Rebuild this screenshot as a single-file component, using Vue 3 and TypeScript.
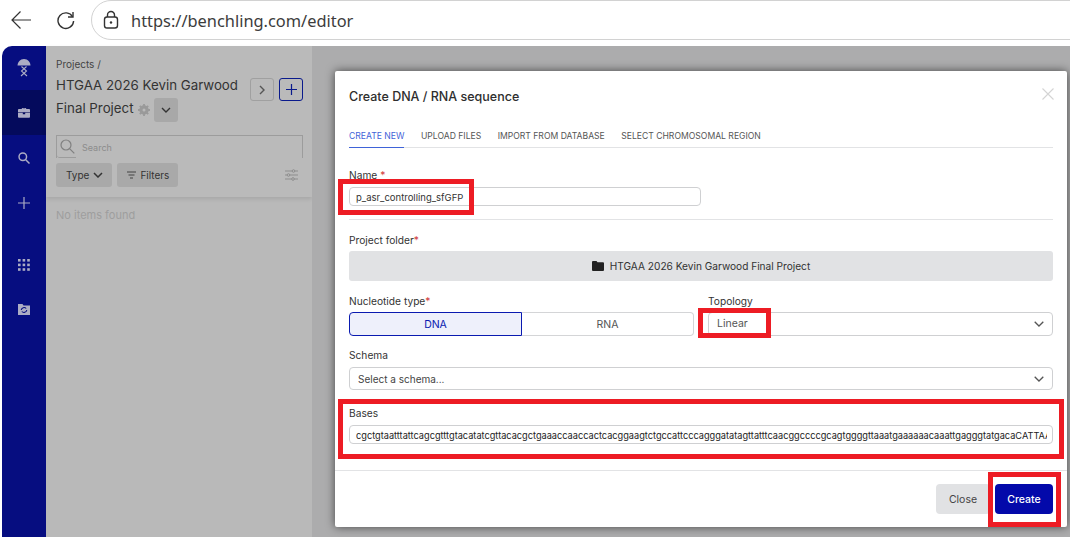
<template>
  <div class="page">
    <header class="browser-bar">
      <svg class="nav-icon" width="26" height="22" viewBox="0 0 26 22" fill="none" stroke="#333" stroke-width="1.2">
        <path d="M22 11H3M11.500 2.500 3 11l8.500 8.500" />
      </svg>
      <svg class="nav-icon reload" width="20" height="20" viewBox="0 0 20 20" fill="none" stroke="#333" stroke-width="1.400">
        <path d="M16.600 6.800A7.800 7.800 0 1 0 17.600 11" />
        <path d="M17 2v5h-5" />
      </svg>
      <div class="url-pill">
        <svg width="18" height="20" viewBox="0 0 18 20" fill="none" stroke="#333" stroke-width="1.400">
          <rect x="2.500" y="7" width="13" height="11" rx="2.500" />
          <path d="M5.500 7V5a3.500 3.500 0 0 1 7 0v2" />
          <circle cx="9" cy="12.500" r="1.200" fill="#333" stroke="none" />
        </svg>
        <span class="url">https://benchling.com/editor</span>
      </div>
    </header>

    <div class="app">
      <nav class="rail">
        <div class="rail-item logo">
          <svg width="14" height="18" viewBox="0 0 14 18" fill="#acacc4">
            <path d="M7 0C3 0 .8 3 .5 6.500h13C13.200 3 11 0 7 0Z" />
            <path d="M4.500 7.500 9.500 12 4 17M9.500 7.500 4.500 12 10 17" fill="none" stroke="#acacc4" stroke-width="1.100" />
          </svg>
        </div>
        <div class="rail-item active">
          <svg width="12" height="11" viewBox="0 0 14 12" fill="#acacc4">
            <path d="M4.500 2V.8h5V2H13a1 1 0 0 1 1 1v2.600H0V3a1 1 0 0 1 1-1h3.500Zm1 0h3v-.4h-3V2Z" />
            <path d="M0 6.400h5.600V8h2.800V6.400H14V11a1 1 0 0 1-1 1H1a1 1 0 0 1-1-1V6.400Z" />
          </svg>
        </div>
        <div class="rail-item">
          <svg width="12" height="12" viewBox="0 0 14 14" fill="none" stroke="#acacc4" stroke-width="1.700">
            <circle cx="5.600" cy="5.600" r="4.400" />
            <path d="m9 9 4.400 4.400" />
          </svg>
        </div>
        <div class="rail-item">
          <svg width="12" height="12" viewBox="0 0 13 13" stroke="#acacc4" stroke-width="1.300">
            <path d="M6.500 0v13M0 6.500h13" />
          </svg>
        </div>
        <div class="rail-item apps">
          <svg width="12" height="12" viewBox="0 0 12 12" fill="#acacc4">
            <template v-for="row in [0, 1, 2]" :key="row">
              <rect v-for="col in [0, 1, 2]" :key="col" :x="col * 4.600" :y="row * 4.600" width="2.600" height="2.600" />
            </template>
          </svg>
        </div>
        <div class="rail-item">
          <svg width="12" height="11" viewBox="0 0 12 11">
            <path d="M0 0h4.500l1 1.400H12V11H0Z" fill="#acacc4" />
            <path d="M3.200 6a2.900 2.900 0 0 1 5-1.500M8.800 6a2.900 2.900 0 0 1-5 1.500" fill="none" stroke="#060d80" stroke-width="1.100" />
          </svg>
        </div>
      </nav>

      <aside class="panel">
        <div class="panel-head">
          <div class="crumb">Projects /</div>
          <div class="title-row">
            <div class="title">
              <div class="title-line">HTGAA 2026 Kevin Garwood</div>
              <div class="title-line second">
                Final Project
                <svg class="gear" width="12" height="12" viewBox="0 0 12 12">
                  <circle cx="6" cy="6" r="3.400" fill="none" stroke="#9a9a9a" stroke-width="2.600" />
                  <path d="M6 0v12M0 6h12M1.800 1.800l8.400 8.400M10.200 1.800l-8.400 8.400" stroke="#9a9a9a" stroke-width="1.800" />
                  <circle cx="6" cy="6" r="1.500" fill="#bababa" />
                </svg>
                <span class="title-menu">
                  <svg width="10" height="6" viewBox="0 0 10 6" fill="none" stroke="#333" stroke-width="1.400"><path d="m1 1 4 4 4-4" /></svg>
                </span>
              </div>
            </div>
            <button class="square-btn" type="button">
              <svg width="6" height="10" viewBox="0 0 6 10" fill="none" stroke="#555" stroke-width="1.400"><path d="m1 1 4 4-4 4" /></svg>
            </button>
            <button class="square-btn add" type="button">
              <svg width="11" height="11" viewBox="0 0 11 11" stroke="#0a1a8c" stroke-width="1.200"><path d="M5.500 0v11M0 5.500h11" /></svg>
            </button>
          </div>

          <div class="search">
            <span class="search-icon">
              <svg width="15" height="15" viewBox="0 0 15 15" fill="none" stroke="#808080" stroke-width="1.200">
                <circle cx="6" cy="6" r="5" />
                <path d="m9.800 9.800 4.500 4.500" />
              </svg>
            </span>
            <span>Search</span>
          </div>

          <div class="filters">
            <button class="filter-btn" type="button">
              Type
              <svg width="10" height="6" viewBox="0 0 10 6" fill="none" stroke="#333" stroke-width="1.500"><path d="m1 1 4 4 4-4" /></svg>
            </button>
            <button class="filter-btn" type="button">
              <svg width="9" height="8" viewBox="0 0 9 8" stroke="#444" stroke-width="1.200"><path d="M0 1h9M1.500 4h6M3 7h3" /></svg>
              Filters
            </button>
            <svg class="sliders" width="13" height="12" viewBox="0 0 13 12" fill="#bababa" stroke="#8e8e8e">
              <path d="M0 2h13M0 6h13M0 10h13" />
              <circle cx="8.500" cy="2" r="1.300" />
              <circle cx="3.500" cy="6" r="1.300" />
              <circle cx="8" cy="10" r="1.300" />
            </svg>
          </div>
        </div>
        <div class="empty">No items found</div>
      </aside>

      <main class="stage">
        <section class="modal">
          <div class="modal-head">
            <h2>Create DNA / RNA sequence</h2>
            <svg width="12" height="12" viewBox="0 0 12 12" stroke="#d4d4d4" stroke-width="1.100"><path d="m.5.5 11 11M11.500.5l-11 11" /></svg>
          </div>

          <div class="tabs">
            <span v-for="(tab, i) in tabs" :key="tab" class="tab" :class="{ 'tab--active': i === 0 }">{{ tab }}</span>
          </div>

          <div class="name-section">
            <label class="field-label">Name <em>*</em></label>
            <div class="input name-input">p_asr_controlling_sfGFP</div>
          </div>

          <div class="folder-section">
            <label class="field-label">Project folder<em>*</em></label>
            <div class="folder-box">
              <svg width="12" height="10" viewBox="0 0 12 10" fill="#222"><path d="M0 1a1 1 0 0 1 1-1h3.500l1 1.200H11a1 1 0 0 1 1 1V9a1 1 0 0 1-1 1H1a1 1 0 0 1-1-1Z" /></svg>
              HTGAA 2026 Kevin Garwood Final Project
            </div>

            <div class="type-row">
              <div>
                <label class="field-label">Nucleotide type<em>*</em></label>
                <div class="segments">
                  <span class="segment segment--on">DNA</span>
                  <span class="segment">RNA</span>
                </div>
              </div>
              <div>
                <label class="field-label">Topology</label>
                <div class="input select topology">
                  Linear
                  <svg width="10" height="6" viewBox="0 0 10 6" fill="none" stroke="#555" stroke-width="1.300"><path d="m.7.700 4.300 4.300L9.300.7" /></svg>
                </div>
              </div>
            </div>

            <label class="field-label schema-label">Schema</label>
            <div class="input select schema">
              Select a schema...
              <svg width="10" height="6" viewBox="0 0 10 6" fill="none" stroke="#555" stroke-width="1.300"><path d="m.7.700 4.300 4.300L9.300.7" /></svg>
            </div>

            <label class="field-label bases-label">Bases</label>
            <div class="input bases"><span class="bases-text">{{ bases }}</span></div>
          </div>

          <footer class="modal-foot">
            <button class="btn btn--close" type="button">Close</button>
            <button class="btn btn--create" type="button">Create</button>
          </footer>

          <!-- red annotation boxes drawn over the screenshot -->
          <i v-for="box in marks" :key="box.id" class="mark" :style="box.style" />
        </section>
      </main>
    </div>
  </div>
</template>

<script setup lang="ts">
  const tabs = ['CREATE NEW', 'UPLOAD FILES', 'IMPORT FROM DATABASE', 'SELECT CHROMOSOMAL REGION']

  const bases =
    'cgctgtaatttattcagcgtttgtacatatcgttacacgctgaaaccaaccactcacggaagtctgccattcccagggatatagttatttcaacggccccgcagtggggttaaatgaaaaaacaaattgagggtatgacaCATTAATTGCG'

  // page coordinates of the annotations, relative to the modal corner (335, 71)
  const rect = (x: number, y: number, w: number, h: number) => ({
    left: `${x - 335}px`,
    top: `${y - 71}px`,
    width: `${w}px`,
    height: `${h}px`
  })

  const marks = [
    { id: 'name', style: rect(338, 179, 136, 36) },
    { id: 'topology', style: rect(698, 308, 73, 30) },
    { id: 'bases', style: rect(338, 399, 726, 60) },
    { id: 'create', style: rect(988, 472, 73, 55) }
  ]
</script>

<style>
  html,
  body {
    margin: 0;
    background: #fff;
  }
</style>

<style scoped>
  .page {
    width: 1070px;
    height: 537px;
    overflow: hidden;
    display: flex;
    flex-direction: column;
    font-family: Inter, 'Noto Sans', sans-serif;
    color: #2b2b2b;
  }

  .browser-bar {
    height: 46px;
    flex: none;
    display: flex;
    align-items: flex-start;
    padding-left: 9px;
    box-sizing: border-box;
    background: #fff;
  }

  .nav-icon {
    margin-top: 9px;
  }

  .reload {
    margin-left: 21px;
    margin-top: 10px;
  }

  .url-pill {
    margin-left: 15px;
    flex: 1;
    height: 40px;
    margin-right: -30px;
    padding-left: 10px;
    display: flex;
    align-items: center;
    gap: 11px;
    border: 1px solid #d2d2d2;
    border-radius: 20px;
    box-sizing: border-box;
  }

  .url {
    font-family: 'Noto Sans', sans-serif;
    font-size: 16.400px;
    color: #3c3c3c;
  }

  .app {
    flex: 1;
    display: flex;
    min-height: 0;
    padding-left: 2px;
    background: #fff;
  }

  .rail {
    width: 44px;
    flex: none;
    background: #060d80;
    border-top-left-radius: 10px;
  }

  .rail-item {
    height: 45px;
    display: flex;
    align-items: center;
    justify-content: center;
  }

  .rail-item.logo {
    height: 44px;
  }

  .rail-item.active {
    background: #040a5c;
  }

  .rail-item.apps {
    margin-top: 17px;
  }

  .panel {
    width: 266px;
    flex: none;
    background: #b9b9b9;
  }

  .panel-head {
    height: 151px;
    box-sizing: border-box;
    padding: 12px 9px 0 10px;
    background: #bababa;
    box-shadow: 0 2px 4px rgba(0, 0, 0, 0.1);
  }

  .crumb {
    font-size: 10px;
    line-height: 13px;
    color: #444;
  }

  .title-row {
    display: flex;
    align-items: flex-start;
    margin-top: 7px;
  }

  .title {
    flex: 1;
    min-width: 0;
  }

  .title-line {
    height: 20px;
    font-size: 13.300px;
    line-height: 15px;
    color: #333;
    white-space: nowrap;
  }

  .title-line.second {
    height: 24px;
    display: flex;
    align-items: flex-start;
    line-height: 20px;
  }

  .gear {
    margin: 6px 4px 0 4px;
  }

  .title-menu {
    width: 24px;
    height: 24px;
    border-radius: 3px;
    background: #a8a8a8;
    display: flex;
    align-items: center;
    justify-content: center;
  }

  .square-btn {
    flex: none;
    width: 24px;
    height: 23px;
    margin-left: 5px;
    padding: 0;
    display: flex;
    align-items: center;
    justify-content: center;
    background: transparent;
    border: 1px solid #a0a0a0;
    border-radius: 3px;
  }

  .square-btn.add {
    border-color: #0a1a8c;
  }

  .search {
    height: 23px;
    margin-top: 13px;
    box-sizing: border-box;
    display: flex;
    align-items: center;
    gap: 6px;
    border: 1px solid #9c9c9c;
    border-bottom: 0;
    font-size: 9px;
    color: #8c8c8c;
  }

  .search-icon {
    align-self: stretch;
    width: 19px;
    padding-left: 3px;
    box-sizing: border-box;
    display: flex;
    align-items: center;
    border-bottom: 1px solid #9c9c9c;
    border-bottom-left-radius: 3px;
  }

  .filters {
    display: flex;
    align-items: center;
    gap: 5px;
    margin-top: 5px;
  }

  .filter-btn {
    height: 24px;
    padding: 0 9px 0 10px;
    display: flex;
    align-items: center;
    gap: 4px;
    border: 0;
    border-radius: 3px;
    background: #a9a9a9;
    font: inherit;
    font-size: 10px;
    color: #333;
  }

  .sliders {
    margin-left: auto;
    margin-right: 5px;
  }

  .empty {
    margin: 11px 0 0 10px;
    font-size: 11px;
    line-height: 14px;
    color: #9e9e9e;
  }

  .stage {
    flex: 1;
    min-width: 0;
    padding: 25px 3px 0 23px;
    background: #acacad;
  }

  .modal {
    position: relative;
    height: 456px;
    padding: 0 14px;
    background: #fff;
    border-radius: 2px;
    box-shadow: 0 0 10px rgba(0, 0, 0, 0.6);
  }

  .modal-head {
    height: 50px;
    display: flex;
    align-items: center;
    justify-content: space-between;
  }

  .modal-head h2 {
    margin: 0;
    font-size: 12.500px;
    font-weight: 500;
    color: #2e2e2e;
  }

  .modal-head svg {
    margin: -4px -1px 0 0;
  }

  .tabs {
    display: flex;
    gap: 16.500px;
    height: 27px;
    border-bottom: 1px solid #e2e3e5;
    box-sizing: border-box;
    align-items: flex-end;
  }

  .tab {
    padding-bottom: 5px;
    margin-bottom: -1px;
    font-size: 8.600px;
    line-height: 12px;
    color: #555;
    white-space: nowrap;
    border-bottom: 1px solid transparent;
  }

  .tab--active {
    color: #3f63d8;
    border-bottom-color: #3f63d8;
  }

  .name-section {
    height: 72px;
    box-sizing: border-box;
    padding-top: 21px;
    border-bottom: 1px solid #e2e3e5;
  }

  .field-label {
    display: block;
    font-size: 10.200px;
    line-height: 13px;
    color: #333;
  }

  .field-label em {
    color: #d23c3c;
    font-style: normal;
  }

  .input {
    box-sizing: border-box;
    border: 1px solid #cfd0d2;
    border-radius: 4px;
    font-size: 9.500px;
    color: #333;
    background: #fff;
    display: flex;
    align-items: center;
  }

  .name-input {
    width: 352px;
    height: 19px;
    margin-top: 5px;
    padding: 1px 0 0 6px;
  }

  .folder-section {
    padding-top: 14px;
  }

  .folder-box {
    height: 30px;
    margin-top: 4px;
    display: flex;
    align-items: center;
    justify-content: center;
    gap: 6px;
    border-radius: 3px;
    background: #e1e2e4;
    font-size: 10.150px;
    color: #333;
  }

  .type-row {
    display: grid;
    grid-template-columns: 345px 345px;
    gap: 14px;
    margin-top: 14px;
  }

  .segments {
    display: flex;
    height: 24px;
    margin-top: 4px;
    font-size: 10.500px;
  }

  .segment {
    flex: 1;
    display: flex;
    align-items: center;
    justify-content: center;
    box-sizing: border-box;
    border: 1px solid #d4d5d7;
    border-left: 0;
    border-radius: 0 4px 4px 0;
    color: #555;
  }

  .segment--on {
    border: 1px solid #0a1ab0;
    border-radius: 4px 0 0 4px;
    background: #eef0fb;
    color: #0a1ab0;
  }

  .select {
    height: 24px;
    margin-top: 4px;
    padding: 0 8px;
    justify-content: space-between;
    font-size: 10.500px;
    color: #555;
  }

  .topology {
    padding-bottom: 1px;
  }

  .schema-label {
    margin-top: 13px;
  }

  .schema {
    height: 23px;
    margin-top: 5px;
    font-size: 10px;
    color: #444;
  }

  .bases-label {
    margin-top: 17px;
  }

  .bases {
    height: 19px;
    margin-top: 5px;
    padding: 1px 5px 0 6px;
    overflow: hidden;
  }

  .bases-text {
    white-space: nowrap;
    overflow: hidden;
    font-size: 9.200px;
    color: #222;
  }

  .modal-foot {
    position: absolute;
    left: 0;
    right: 0;
    bottom: 0;
    height: 57px;
    padding: 13px 14px 0;
    box-sizing: border-box;
    display: flex;
    justify-content: flex-end;
    align-items: flex-start;
    gap: 5px;
    border-top: 1px solid #e2e3e5;
  }

  .btn {
    height: 30px;
    padding: 0;
    border: 0;
    border-radius: 4px;
    font: inherit;
    font-size: 10.500px;
  }

  .btn--close {
    width: 54px;
    background: #e1e2e4;
    color: #444;
  }

  .btn--create {
    width: 58px;
    background: #0309aa;
    color: #fff;
    font-weight: 500;
  }

  .mark {
    position: absolute;
    box-sizing: border-box;
    border: 5px solid #ed1c24;
    pointer-events: none;
  }
</style>
